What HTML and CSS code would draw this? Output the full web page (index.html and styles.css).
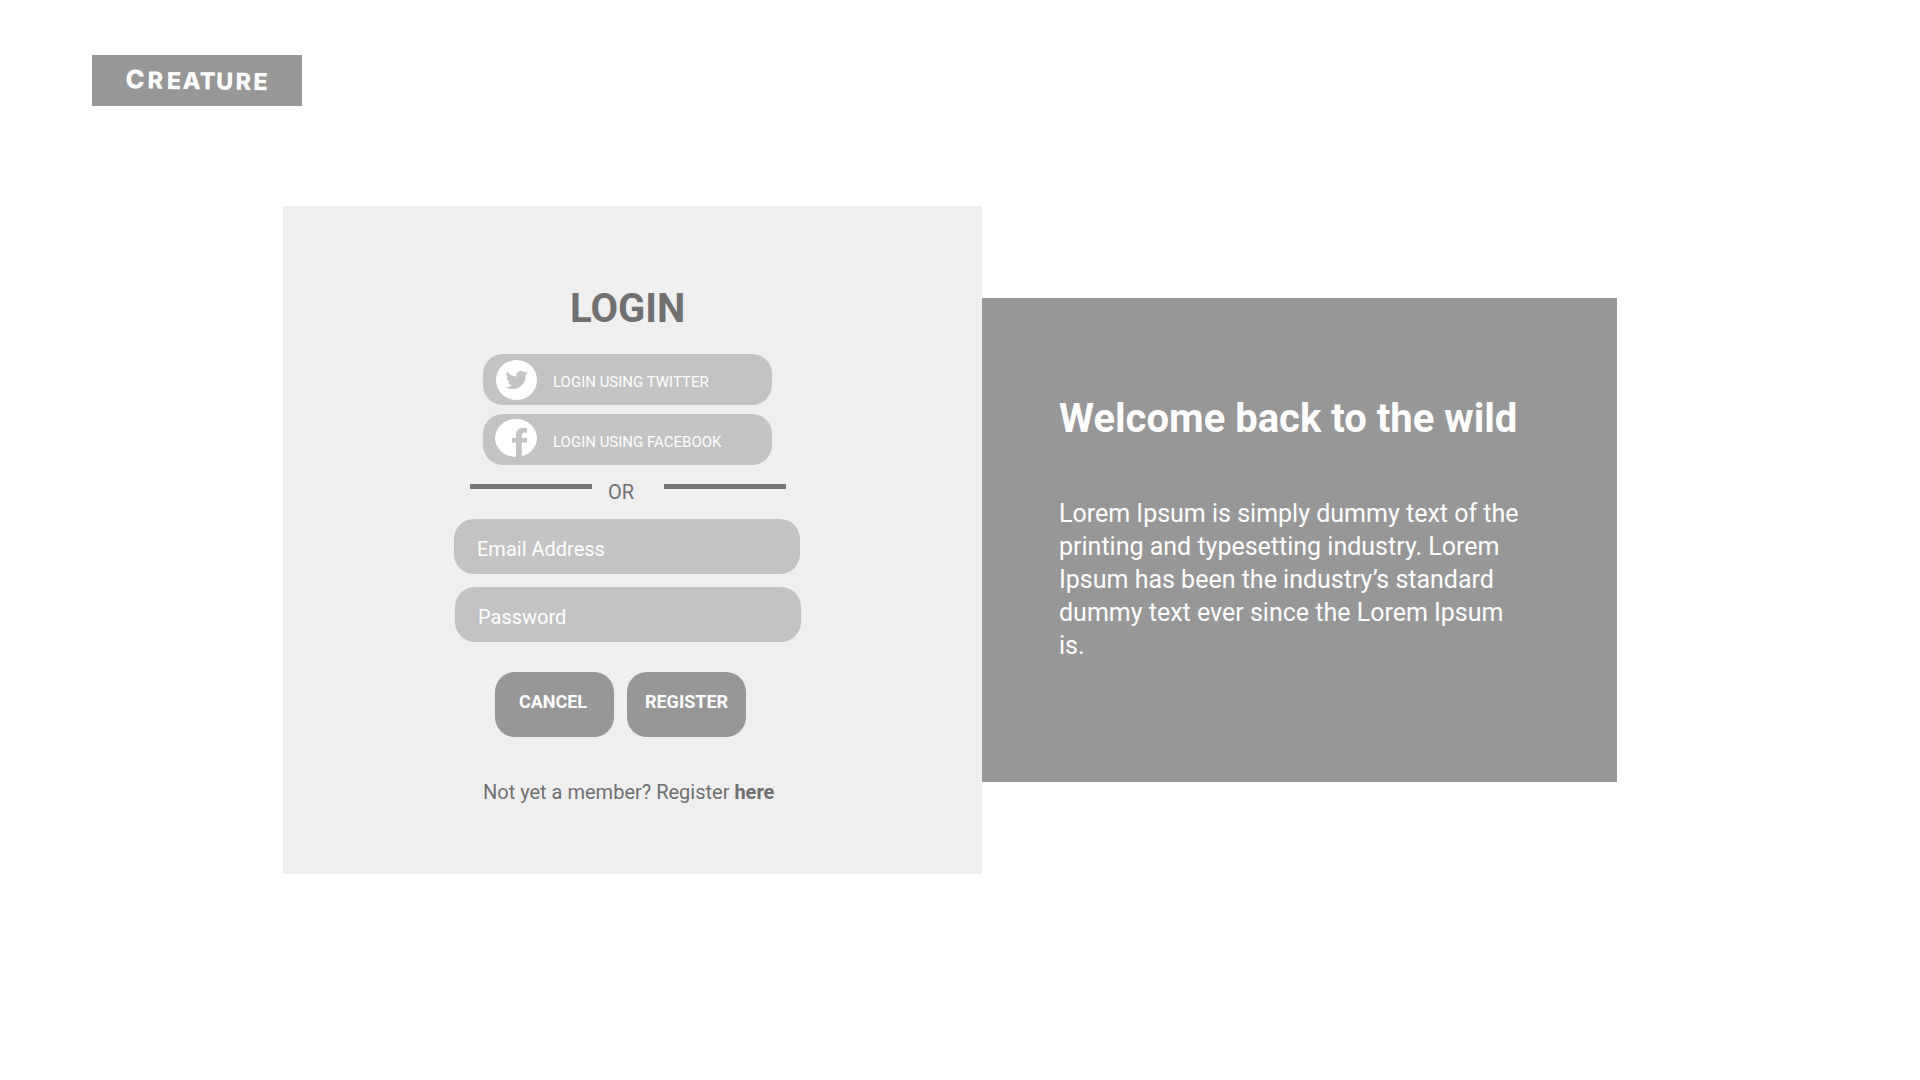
FILE: index.html
```
<!DOCTYPE html>
<html lang="en">
<head>
<meta charset="utf-8">
<title>Creature – Login</title>
<link rel="stylesheet" href="styles.css">
</head>
<body>
<header class="header"><a class="logo"><svg class="logo-svg" width="210" height="51" viewBox="0 0 210 51"><text class="logo-text" x="33.500 55.400 74.700 90.400 107.500 124.100 143.400 161.200" y="33.300" transform="rotate(0.8 33 33)"><tspan class="logo-initial">C</tspan>REATURE</text></svg></a></header>
<main class="main">
  <section class="login">
    <h1 class="login-title">LOGIN</h1>
    <div class="social">
      <button class="social-btn">
        <svg class="social-icon twitter" width="41" height="40" viewBox="0 0 41 40"><ellipse cx="20.5" cy="20" rx="20.5" ry="20" fill="#fff"/><path transform="translate(9.6 8.800) scale(.93)" fill="#c3c3c3" d="M23.95 4.57a10 10 0 0 1-2.82.77 4.96 4.96 0 0 0 2.16-2.72c-.95.55-2 .95-3.13 1.18a4.92 4.92 0 0 0-8.38 4.48C7.69 8.1 4.07 6.13 1.64 3.16a4.92 4.92 0 0 0 1.52 6.57 4.9 4.9 0 0 1-2.23-.61v.06c0 2.39 1.7 4.38 3.95 4.83a5 5 0 0 1-2.21.08 4.94 4.94 0 0 0 4.6 3.42A9.87 9.87 0 0 1 0 19.54a14 14 0 0 0 7.55 2.21c9.05 0 14-7.5 14-13.98 0-.21 0-.42-.02-.63a9.94 9.94 0 0 0 2.46-2.55z"/></svg>
        <span>LOGIN USING TWITTER</span>
      </button>
      <button class="social-btn">
        <svg class="social-icon facebook" width="42" height="38" viewBox="0 0 42 38"><ellipse cx="21" cy="19" rx="21" ry="19" fill="#fff"/><path fill="#c3c3c3" d="M21 38V23.500h-4V19h4v-3.200C21 11.200 24 9 28 9h4v4.500h-2.500c-2 0-2.700 1-2.700 2.500v3H32v4.500h-5.200V38z"/></svg>
        <span>LOGIN USING FACEBOOK</span>
      </button>
    </div>
    <div class="divider"><i class="rule"></i><span class="or">OR</span><i class="rule"></i></div>
    <div class="fields">
      <label class="field">Email Address</label>
      <label class="field field-password">Password</label>
    </div>
    <div class="actions">
      <button class="action cancel">CANCEL</button>
      <button class="action">REGISTER</button>
    </div>
    <p class="signup">Not yet a member? Register <b>here</b></p>
  </section>
  <section class="welcome">
    <h2 class="welcome-title">Welcome back to the wild</h2>
    <p class="welcome-text">Lorem Ipsum is simply dummy text of the printing and typesetting industry. Lorem Ipsum has been the industry’s standard dummy text ever since the Lorem Ipsum is.</p>
  </section>
</main>
</body>
</html>
```
FILE: styles.css
```
* { box-sizing: border-box; margin: 0; }
body { background: #fff; font-family: Roboto, sans-serif; color: #707070; }
.header { height: 206px; padding: 55px 0 0 92px; }
.logo { display: block; width: 210px; height: 51px; background: #979797; }
.logo-svg { display: block; }
.logo-text { font: 800 23.5px Inter, sans-serif; fill: #fff; }
.logo-initial { font-size: 25.5px; }
.main { display: flex; align-items: center; padding-left: 283px; height: 668px; }
.login { width: 699px; height: 668px; background: #efefef; padding-top: 79px; }
.login-title { padding-left: 287px; font-size: 40px; line-height: 48px; font-weight: 700; }
.social { display: flex; flex-direction: column; gap: 9px; margin: 21px 0 0 200px; }
.social-btn { display: flex; width: 289px; height: 51px; padding: 0; border: 0; border-radius: 20px; background: #c3c3c3; color: #fff; font: 400 15px/18px Roboto, sans-serif; }
.social-btn span { margin: 19px 0 0 16px; }
.social-icon { display: block; flex: none; }
.twitter { margin: 6px 0 0 13px; }
.facebook { margin: 5px 0 0 12px; }
.divider { display: flex; margin: 19px 0 0 187px; height: 35px; font-size: 20px; line-height: 17px; }
.rule { width: 122px; height: 5px; background: #757575; }
.or { width: 72px; padding-left: 16px; }
.fields { display: flex; flex-direction: column; gap: 13px; padding-left: 171px; }
.field { display: block; width: 346px; height: 55px; padding: 18px 0 0 23px; border-radius: 20px; background: #c3c3c3; color: #fff; font-size: 20px; line-height: 24px; }
.field-password { margin-left: 1px; }
.actions { display: flex; gap: 13px; margin: 30px 0 0 212px; }
.action { width: 119px; height: 65px; padding: 0 0 5px; border: 0; border-radius: 20px; background: #979797; color: #fff; font: 700 18px/20px Roboto, sans-serif; }
.cancel { padding-right: 3px; }
.signup { margin: 43px 0 0 200px; font-size: 20px; line-height: 24px; }
.welcome { width: 635px; height: 484px; background: #979797; color: #fff; padding: 97px 95px 0 77px; }
.welcome-title { font-size: 40px; line-height: 48px; font-weight: 700; white-space: nowrap; }
.welcome-text { margin-top: 54px; font-size: 25px; line-height: 33px; }
```
